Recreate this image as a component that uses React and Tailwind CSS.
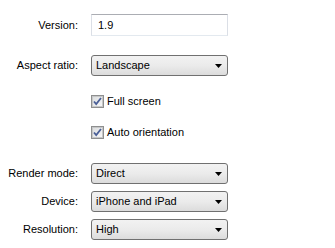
const font = { fontFamily: '"Liberation Sans", Arial, sans-serif' }

function Label({ children }) {
  return <div className="w-[78px] shrink-0 text-right text-[11px] text-black">{children}</div>
}

function Select({ value }) {
  return (
    <div className="flex h-[21px] w-[137px] items-center justify-between rounded-[3px] border border-[#707070] bg-gradient-to-b from-[#f2f2f2] via-[#ebebeb] to-[#dcdcdc] pl-[4px] pr-[5px] text-[11px] text-black">
      <span>{value}</span>
      <svg width="7" height="4" viewBox="0 0 7 4">
        <path d="M0 0h7L3.5 4z" fill="#000" />
      </svg>
    </div>
  )
}

function Check({ label }) {
  return (
    <div className="flex h-[13px] items-center gap-[3px] pl-[91px] text-[11px] text-black">
      <div className="flex h-[13px] w-[13px] items-center justify-center border border-[#8e8f8f] bg-white">
        <div className="flex h-[11px] w-[11px] items-center justify-center border border-[#c6c7c8] bg-gradient-to-br from-[#dcdedf] to-[#f7f7f8]">
          <svg width="9" height="9" viewBox="0 0 9 9">
            <path d="M1 4.5l2.2 2.6L8 1" fill="none" stroke="#4a5f97" strokeWidth="1.8" />
          </svg>
        </div>
      </div>
      <span>{label}</span>
    </div>
  )
}

function Row({ label, children, className = '' }) {
  return (
    <div className={`flex items-center gap-[13px] ${className}`}>
      <Label>{label}</Label>
      {children}
    </div>
  )
}

export default function App() {
  return (
    <div className="h-[248px] w-[335px] bg-white pt-[14px]" style={font}>
      <Row label="Version:">
        <div className="flex h-[22px] w-[137px] items-center border border-[#abadb3] border-x-[#dbdfe6] border-b-[#e3e9ef] bg-white pl-[6px] text-[11px] text-black">
          1.9
        </div>
      </Row>
      <Row label="Aspect ratio:" className="mt-[19px]">
        <Select value="Landscape" />
      </Row>
      <div className="mt-[19px]">
        <Check label="Full screen" />
      </div>
      <div className="mt-[18px]">
        <Check label="Auto orientation" />
      </div>
      <Row label="Render mode:" className="mt-[24px]">
        <Select value="Direct" />
      </Row>
      <Row label="Device:" className="mt-[7px]">
        <Select value="iPhone and iPad" />
      </Row>
      <Row label="Resolution:" className="mt-[7px]">
        <Select value="High" />
      </Row>
    </div>
  )
}
